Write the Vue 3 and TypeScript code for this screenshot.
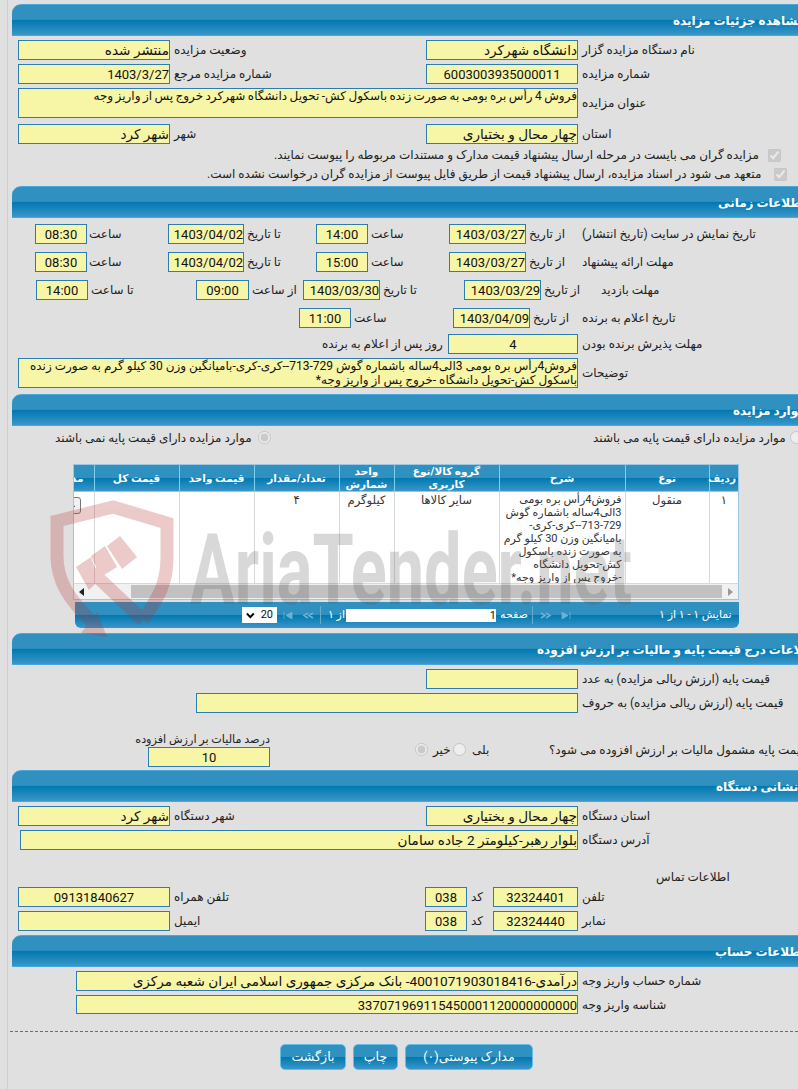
<script setup lang="ts">
type Item = { k: 'l' | 'b' | 'a' | 'c' | 'r'; x: number; w: number; t?: string; c?: boolean; on?: boolean }
type Row = { mt: number; h: number; items: Item[] }

const L = (x: number, w: number, t: string): Item => ({ k: 'l', x, w, t })
const B = (x: number, w: number, t = '', c = false): Item => ({ k: 'b', x, w, t, c })
const A = (x: number, w: number, t: string, c = false): Item => ({ k: 'a', x, w, t, c })
const R = (x: number, on = false): Item => ({ k: 'r', x, w: 13, on })
const C = (x: number): Item => ({ k: 'c', x, w: 13, on: true })

function gap(items: Item[], i: number): number {
  if (i === 0) return items[0].x - 12
  return items[i].x - (items[i - 1].x + items[i - 1].w)
}
const isFa = (t?: string): boolean => /[\u0600-\u06FF]/.test(t ?? '')

const sec1: Row[] = [
  { mt: 4, h: 20, items: [B(18, 152, 'منتشر شده'), L(174, 120, 'وضعیت مزایده'), B(426, 152, 'دانشگاه شهرکرد'), L(582, 160, 'نام دستگاه مزایده گزار')] },
  { mt: 4, h: 20, items: [B(18, 152, '1403/3/27'), L(174, 120, 'شماره مزایده مرجع'), B(426, 152, '6003003935000011', true), L(582, 160, 'شماره مزایده')] },
  { mt: 4, h: 30, items: [A(18, 560, 'فروش 4 رأس بره بومی به صورت زنده باسکول کش- تحویل دانشگاه شهرکرد خروج پس از واریز وجه', true), L(582, 160, 'عنوان مزایده')] },
  { mt: 6, h: 20, items: [B(18, 152, 'شهر کرد'), L(174, 120, 'شهر'), B(426, 152, 'چهار محال و بختیاری'), L(582, 160, 'استان')] },
  { mt: 3, h: 16, items: [L(274, 489, 'مزایده گران می بایست در مرحله ارسال پیشنهاد قیمت مدارک و مستندات مربوطه را پیوست نمایند.'), C(768)] },
  { mt: 3, h: 16, items: [L(207, 563, 'متعهد می شود در اسناد مزایده، ارسال پیشنهاد قیمت از طریق فایل پیوست از مزایده گران درخواست نشده است.'), C(774)] }
]

const sec2: Row[] = [
  { mt: 6, h: 20, items: [B(35, 52, '08:30', true), L(89, 60, 'ساعت'), B(168, 76, '1403/04/02'), L(247, 60, 'تا تاریخ'), B(316, 52, '14:00', true), L(371, 60, 'ساعت'), B(449, 77, '1403/03/27'), L(529, 50, 'از تاریخ'), L(582, 200, 'تاریخ نمایش در سایت (تاریخ انتشار)')] },
  { mt: 8, h: 20, items: [B(35, 52, '08:30', true), L(89, 60, 'ساعت'), B(168, 76, '1403/04/02'), L(247, 60, 'تا تاریخ'), B(316, 52, '15:00', true), L(371, 60, 'ساعت'), B(449, 77, '1403/03/27'), L(529, 50, 'از تاریخ'), L(582, 200, 'مهلت ارائه پیشنهاد')] },
  { mt: 8, h: 20, items: [B(36, 52, '14:00', true), L(91, 60, 'تا ساعت'), B(196, 53, '09:00', true), L(252, 50, 'از ساعت'), B(303, 77, '1403/03/30'), L(383, 70, 'تا تاریخ'), B(464, 77, '1403/03/29'), L(544, 55, 'از تاریخ'), L(601, 100, 'مهلت بازدید')] },
  { mt: 8, h: 20, items: [B(299, 52, '11:00', true), L(354, 90, 'ساعت'), B(453, 77, '1403/04/09'), L(533, 45, 'از تاریخ'), L(582, 200, 'تاریخ اعلام به برنده')] },
  { mt: 6, h: 20, items: [L(322, 124, 'روز پس از اعلام به برنده'), B(448, 130, '4', true), L(582, 200, 'مهلت پذیرش برنده بودن')] },
  { mt: 4, h: 30, items: [A(18, 560, 'فروش4رأس بره بومی 3الی4ساله باشماره گوش 729-713--کری-کری-بامیانگین وزن 30 کیلو گرم به صورت زنده باسکول کش-تحویل دانشگاه -خروج پس از واریز وجه*'), L(582, 200, 'توضیحات')] }
]

const sec3: Row[] = [
  { mt: 5, h: 13, items: [L(55, 203, 'موارد مزایده دارای قیمت پایه نمی باشند'), R(258, true), L(593, 197, 'موارد مزایده دارای قیمت پایه می باشند'), R(790)] }
]

const sec4: Row[] = [
  { mt: 4, h: 20, items: [B(426, 152), L(582, 210, 'قیمت پایه (ارزش ریالی مزایده) به عدد')] },
  { mt: 4, h: 20, items: [B(196, 382), L(582, 210, 'قیمت پایه (ارزش ریالی مزایده) به حروف')] }
]

const sec5: Row[] = [
  { mt: 4, h: 20, items: [B(18, 152, 'شهر کرد'), L(174, 120, 'شهر دستگاه'), B(426, 152, 'چهار محال و بختیاری'), L(582, 160, 'استان دستگاه')] },
  { mt: 4, h: 20, items: [B(20, 558, 'بلوار رهبر-کیلومتر 2 جاده سامان'), L(582, 160, 'آدرس دستگاه')] },
  { mt: 19, h: 16, items: [L(656, 100, 'اطلاعات تماس')] },
  { mt: 2, h: 20, items: [B(18, 152, '09131840627', true), L(174, 120, 'تلفن همراه'), B(425, 42, '038', true), L(471, 20, 'کد'), B(493, 85, '32324401', true), L(582, 100, 'تلفن')] },
  { mt: 4, h: 20, items: [B(18, 152), L(174, 120, 'ایمیل'), B(425, 42, '038', true), L(471, 20, 'کد'), B(493, 85, '32324440', true), L(582, 100, 'نمابر')] }
]

const sec6: Row[] = [
  { mt: 4, h: 20, items: [B(76, 502, 'درآمدی-4001071903018416- بانک مرکزی جمهوری اسلامی ایران شعبه مرکزی'), L(582, 200, 'شماره حساب واریز وجه')] },
  { mt: 4, h: 19, items: [B(76, 502, '337071969115450001120000000000'), L(582, 200, 'شناسه واریز وجه')] }
]

const sections = [
  { title: 'مشاهده جزئیات مزایده', tx: 661, rows: sec1, mb: 4 },
  { title: 'اطلاعات زمانی', tx: 706, rows: sec2, mb: 6 }
]

const cols = [29, 84, 126, 105, 55, 85, 75, 85, 30]
const heads = ['ردیف', 'نوع', 'شرح', 'گروه کالا/نوع کاربری', 'واحد شمارش', 'تعداد/مقدار', 'قیمت واحد', 'قیمت کل']
const descLines = ['فروش4رأس بره بومی', '3الی4ساله باشماره گوش', '713-729--کری-کری-', 'بامیانگین وزن 30 کیلو گرم', 'به صورت زنده باسکول', 'کش-تحویل دانشگاه', '-خروج پس از واریز وجه*']
const cellsAfter = ['سایر کالاها', 'کیلوگرم', '۴', '', '']
</script>

<template>
  <div class="page">
    <template v-for="s in sections" :key="s.title">
      <h2 class="head"><span :style="{ marginLeft: s.tx + 'px' }">{{ s.title }}</span></h2>
      <div class="body" :style="{ marginBottom: s.mb + 'px' }">
        <div v-for="(r, i) in s.rows" :key="i" class="row" :style="{ marginTop: r.mt + 'px', height: r.h + 'px' }">
          <template v-for="(it, j) in r.items" :key="j">
            <span v-if="it.k === 'l'" class="lab" :style="{ width: it.w + 'px', marginLeft: gap(r.items, j) + 'px' }">{{ it.t }}</span>
            <span v-else-if="it.k === 'b'" class="box" :class="{ mid: it.c, fa: isFa(it.t) }" :style="{ width: it.w + 'px', marginLeft: gap(r.items, j) + 'px' }">{{ it.t }}</span>
            <span v-else-if="it.k === 'a'" class="area" :class="{ tight: it.c }" :style="{ width: it.w + 'px', marginLeft: gap(r.items, j) + 'px' }">{{ it.t }}</span>
            <input v-else-if="it.k === 'c'" class="opt" type="checkbox" checked disabled :style="{ marginLeft: gap(r.items, j) + 'px' }" />
          </template>
        </div>
      </div>
    </template>

    <h2 class="head"><span style="margin-left: 721px">موارد مزایده</span></h2>
    <div class="row" :style="{ marginTop: sec3[0].mt + 'px', height: sec3[0].h + 'px' }">
      <template v-for="(it, j) in sec3[0].items" :key="j">
        <span v-if="it.k === 'l'" class="lab" :style="{ width: it.w + 'px', marginLeft: gap(sec3[0].items, j) + 'px' }">{{ it.t }}</span>
        <input v-else class="opt" type="radio" name="base" :checked="it.on" disabled :style="{ marginLeft: gap(sec3[0].items, j) + 'px' }" />
      </template>
    </div>

    <div class="grid-wrap">
      <div class="scroller">
        <table class="grid">
          <colgroup><col v-for="(c, i) in cols" :key="i" :style="{ width: c + 'px' }" /></colgroup>
          <thead>
            <tr>
              <th v-for="h in heads" :key="h">{{ h }}</th>
              <th class="clip-h">مدارک</th>
            </tr>
          </thead>
          <tbody>
            <tr>
              <td>۱</td>
              <td>منقول</td>
              <td class="desc"><div v-for="d in descLines" :key="d" class="dl">{{ d }}</div></td>
              <td v-for="(c, i) in cellsAfter" :key="i">{{ c }}</td>
              <td class="clip-c"><span class="mini">جزئیات</span></td>
            </tr>
          </tbody>
        </table>
      </div>
      <div class="hbar">
        <i class="arr l"></i>
        <div class="thumb"></div>
        <i class="arr r"></i>
      </div>
      <div class="pager">
        <span class="sel"><svg width="10" height="7" viewBox="0 0 10 7"><path d="M1 1.2 5 5.4 9 1.2" fill="none" stroke="#000" stroke-width="2.2" /></svg><b>20</b></span>
        <svg class="pi first" width="10" height="7" viewBox="0 0 10 7"><path d="M1 0v7M9 0v7L3 3.5z" fill="#6db1d6" stroke="#6db1d6" stroke-width=".8" /></svg>
        <svg class="pi" width="12" height="7" viewBox="0 0 12 7"><path d="M6 1 2 3.5 6 6M11 1 7 3.5 11 6" fill="none" stroke="#6db1d6" stroke-width="1.6" /></svg>
        <i class="sep s1"></i>
        <span class="ptxt of">از ۱</span>
        <span class="pin">1</span>
        <span class="ptxt pg">صفحه</span>
        <i class="sep s2"></i>
        <svg class="pi nx" width="12" height="7" viewBox="0 0 12 7"><path d="M1 1 5 3.5 1 6M6 1 10 3.5 6 6" fill="none" stroke="#6db1d6" stroke-width="1.6" /></svg>
        <svg class="pi ls" width="10" height="7" viewBox="0 0 10 7"><path d="M9 0v7M1 0v7L7 3.5z" fill="#6db1d6" stroke="#6db1d6" stroke-width=".8" /></svg>
        <span class="ptxt info">نمایش ۱ - ۱ از ۱</span>
      </div>
    </div>

    <h2 class="head sp5"><span style="margin-left: 525px">اطلاعات درج قیمت پایه و مالیات بر ارزش افزوده</span></h2>
    <div v-for="(r, i) in sec4" :key="i" class="row" :style="{ marginTop: r.mt + 'px', height: r.h + 'px' }">
      <template v-for="(it, j) in r.items" :key="j">
        <span v-if="it.k === 'l'" class="lab" :style="{ width: it.w + 'px', marginLeft: gap(r.items, j) + 'px' }">{{ it.t }}</span>
        <span v-else class="box" :style="{ width: it.w + 'px', marginLeft: gap(r.items, j) + 'px' }"></span>
      </template>
    </div>
    <div class="tax">
      <div class="tax-col">
        <span class="lab cap">درصد مالیات بر ارزش افزوده</span>
        <span class="box mid tax-box">10</span>
      </div>
      <div class="tax-q">
        <input class="opt" type="radio" name="vat" checked disabled />
        <span class="lab w-no">خیر</span>
        <input class="opt" type="radio" name="vat" disabled />
        <span class="lab w-yes">بلی</span>
        <span class="lab w-q">قیمت پایه مشمول مالیات بر ارزش افزوده می شود؟</span>
      </div>
    </div>

    <h2 class="head sp3"><span style="margin-left: 704px">نشانی دستگاه</span></h2>
    <div v-for="(r, i) in sec5" :key="i" class="row" :style="{ marginTop: r.mt + 'px', height: r.h + 'px' }">
      <template v-for="(it, j) in r.items" :key="j">
        <span v-if="it.k === 'l'" class="lab" :style="{ width: it.w + 'px', marginLeft: gap(r.items, j) + 'px' }">{{ it.t }}</span>
        <span v-else class="box" :class="{ mid: it.c, fa: isFa(it.t) }" :style="{ width: it.w + 'px', marginLeft: gap(r.items, j) + 'px' }">{{ it.t }}</span>
      </template>
    </div>

    <h2 class="head sp4"><span style="margin-left: 703px">اطلاعات حساب</span></h2>
    <div v-for="(r, i) in sec6" :key="i" class="row" :style="{ marginTop: r.mt + 'px', height: r.h + 'px' }">
      <template v-for="(it, j) in r.items" :key="j">
        <span v-if="it.k === 'l'" class="lab" :style="{ width: it.w + 'px', marginLeft: gap(r.items, j) + 'px' }">{{ it.t }}</span>
        <span v-else class="box" :class="{ fa: isFa(it.t) }" :style="{ width: it.w + 'px', marginLeft: gap(r.items, j) + 'px' }">{{ it.t }}</span>
      </template>
    </div>

    <div class="dash"></div>
    <div class="btns">
      <button class="btn b1">بازگشت</button>
      <button class="btn b2">چاپ</button>
      <button class="btn b3">مدارک پیوستی(۰)</button>
    </div>

    <div class="wm" aria-hidden="true">
      <svg class="wm-logo" width="140" height="150" viewBox="45 495 140 150">
        <g opacity=".25">
          <path d="M92 622C70 600 57 582 57 556V521L113 507 167 523V558C167 590 152 605 143 620" fill="none" stroke="#b83030" stroke-width="13" />
          <path d="M92 572 143 620" fill="none" stroke="#b83030" stroke-width="13" />
          <path d="M120 536 137 557 122 569 107 546ZM105 546 117 567 101 577 91 556ZM91 557 99 580 89 590 76 567ZM97 612 107 637 81 633Z" fill="#b83030" />
        </g>
      </svg>
      <span class="wm-txt">AriaTender.net</span>
    </div>
  </div>
</template>

<style scoped>
.page {
  position: relative;
  width: 798px;
  height: 1089px;
  box-sizing: border-box;
  overflow: hidden;
  padding-top: 4px;
  background: linear-gradient(90deg, #e0e0e0 7px, #cfcfcf 7px, #cfcfcf 8px, #e0e0e0 8px);
  font: 12px/16px Roboto, "DejaVu Sans", sans-serif;
  color: #222;
}
.head {
  box-sizing: border-box;
  margin: 0 0 0 12px;
  height: 32px;
  width: 786px;
  border-top: 1px solid #4aa6dc;
  border-bottom: 1px solid #4aa6dc;
  border-top-left-radius: 9px;
  background: linear-gradient(180deg, #3090c0 0, #3090c0 48%, #0078b0 50%, #3a96c8 100%);
  color: #fff;
  font-size: 12px;
  font-weight: 700;
  line-height: 32px;
  white-space: nowrap;
  overflow: hidden;
}
.head span { display: inline-block; direction: rtl; }
.row {
  display: flex;
  align-items: center;
  margin-left: 12px;
  white-space: nowrap;
}
.lab {
  flex: none;
  direction: rtl;
  text-align: left;
  color: #222;
}
.box, .area {
  flex: none;
  box-sizing: border-box;
  direction: rtl;
  height: 100%;
  border: 1px solid #2b7db2;
  background: #f7f5a6;
  color: #111;
  font-size: 13px;
  line-height: 19px;
  text-align: right;
  overflow: hidden;
}
.box.fa { font-size: 13.6px; }
.box.mid { text-align: center; }
.area {
  white-space: normal;
  font-size: 12px;
  line-height: 14px;
}
.area.tight { word-spacing: -.55px; }
.opt {
  flex: none;
  margin: 0;
  width: 13px;
  height: 13px;
}
.grid-wrap {
  margin: 20px 0 0 73px;
  width: 666px;
}
.scroller {
  box-sizing: border-box;
  height: 119px;
  border: 1px solid #9cc6e2;
  border-bottom: 0;
  background: #fff;
  overflow: hidden;
  direction: rtl;
}
.grid {
  table-layout: fixed;
  border-collapse: collapse;
  width: 674px;
  direction: rtl;
}
.grid th {
  height: 26px;
  padding: 0 2px;
  box-sizing: border-box;
  background: linear-gradient(180deg, #3090c0 0, #3090c0 48%, #0078b0 50%, #3a96c8 100%);
  border-left: 1px solid #7fd0f0;
  border-bottom: 1px solid #7fd0f0;
  color: #fff;
  font-size: 10.5px;
  font-weight: 700;
  line-height: 13px;
  text-align: center;
}
.grid td {
  height: 92px;
  padding: 2px 3px 0;
  box-sizing: border-box;
  vertical-align: top;
  border-left: 1px solid #d8d8d8;
  font-size: 11.6px;
  line-height: 13px;
  text-align: center;
  color: #333;
}
.grid td.desc {
  padding-top: 1px;
  font-size: 11px;
  text-align: right;
  white-space: nowrap;
  overflow: hidden;
}
.dl { height: 13px; line-height: 13px; overflow: visible; }
.grid th.clip-h { text-align: right; white-space: nowrap; overflow: hidden; padding-right: 10px; }
.grid td.clip-c { overflow: hidden; white-space: nowrap; padding: 5px 13px 0 0; text-align: right; }
.mini {
  display: inline-block;
  width: 40px;
  height: 17px;
  box-sizing: border-box;
  border: 1px solid #777;
  border-radius: 3px;
  background: #f0f0f0;
  font-size: 10px;
  line-height: 15px;
  text-align: center;
}
.hbar {
  box-sizing: border-box;
  height: 17px;
  display: flex;
  align-items: center;
  padding-left: 5px;
  border: 1px solid #9cc6e2;
  border-top: 1px solid #d8d8d8;
  background: #f1f1f1;
}
.thumb { height: 13px; width: 591px; margin-left: 47px; background: #c1c1c1; flex: none; }
.arr { width: 0; height: 0; border: 4px solid transparent; flex: none; }
.arr.l { border-left: 0; border-right: 5px solid #222; }
.arr.r { border-right: 0; border-left: 5px solid #999; margin-left: 6px; }
.pager {
  box-sizing: border-box;
  height: 26px;
  margin: 2px 0 0 2px;
  width: 664px;
  display: flex;
  align-items: center;
  border-radius: 0 0 6px 6px;
  background: linear-gradient(180deg, #3090c0 0, #3090c0 48%, #0078b0 50%, #3a96c8 100%);
  color: #fff;
  white-space: nowrap;
}
.sel {
  box-sizing: border-box;
  width: 35px;
  height: 16px;
  margin-left: 167px;
  padding: 0 4px;
  background: #fff;
  color: #111;
  display: flex;
  align-items: center;
  gap: 6px;
  font-size: 11px;
  line-height: 16px;
}
.sel b { font-weight: 400; }
.pi { flex: none; }
.first { margin-left: 6px; }
.first + .pi { margin-left: 9px; }
.sep { flex: none; width: 1px; height: 18px; background: #69aacd; }
.s1 { margin-left: 6px; }
.ptxt { direction: rtl; flex: none; font-size: 11px; }
.of { margin-left: 5px; width: 19px; }
.pin {
  box-sizing: border-box;
  width: 150px;
  height: 13px;
  margin-left: 1px;
  background: #fff;
  color: #111;
  font-size: 11px;
  line-height: 13px;
  text-align: right;
  flex: none;
}
.pg { width: 32px; margin-left: 4px; text-align: left; }
.nx { margin-left: 7px; }
.ls { margin-left: 9px; }
.info { width: 78px; margin-left: 88px; text-align: left; }
.sp5 { margin-top: 5px; }
.tax {
  display: flex;
  margin: 20px 0 0 135px;
  height: 34px;
}
.tax-col {
  width: 135px;
  flex: none;
  display: flex;
  flex-direction: column;
  align-items: flex-end;
}
.cap { height: 14px; font-size: 11.2px; line-height: 14px; white-space: nowrap; }
.tax-box { width: 122px; height: 20px; }
.tax-q {
  display: flex;
  align-items: center;
  height: 13px;
  margin: 10px 0 0 145px;
  white-space: nowrap;
}
.w-no { width: 25px; padding-left: 5px; box-sizing: border-box; }
.w-yes { width: 77px; margin-left: 6px; }
.w-q { width: 300px; }
.sp3 { margin-top: 3px; }
.sp4 { margin-top: 4px; }
.dash {
  margin: 17px 0 0 10px;
  border-top: 1px dashed #2b7db2;
}
.btns {
  display: flex;
  gap: 7px;
  margin: 12px 0 0 280px;
}
.btn {
  height: 26px;
  padding: 0;
  border: 1px solid #62bde6;
  border-radius: 5px;
  background: linear-gradient(180deg, #3090c0 0, #3090c0 48%, #0078b0 50%, #3a96c8 100%);
  color: #fff;
  font: 12.6px/16px Roboto, "DejaVu Sans", sans-serif;
  direction: rtl;
}
.b1 { width: 66px; }
.b2 { width: 45px; }
.b3 { width: 128px; }
.wm {
  position: absolute;
  left: 45px;
  top: 495px;
  width: 620px;
  height: 150px;
  pointer-events: none;
}
.wm-logo { position: absolute; left: 0; top: 0; }
.wm-txt {
  position: absolute;
  left: 145px;
  top: 27px;
  font: 700 98px/98px Roboto, sans-serif;
  color: rgba(90, 90, 90, .24);
  transform: scaleX(.68);
  transform-origin: 0 0;
  white-space: nowrap;
}
</style>

<style>
html, body { margin: 0; background: #e0e0e0; overflow: hidden; }
</style>
